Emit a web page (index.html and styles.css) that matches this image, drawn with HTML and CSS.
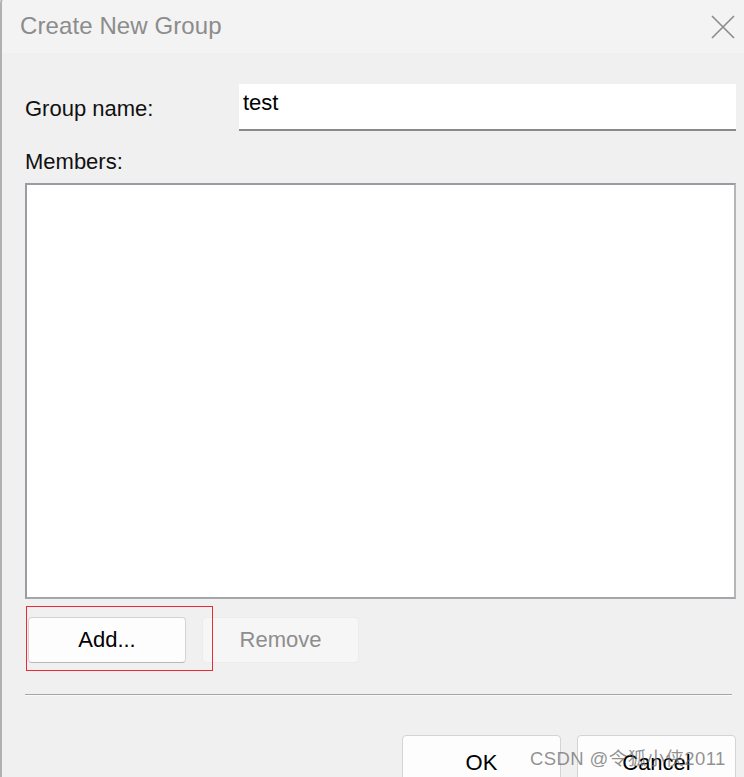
FILE: index.html
```html
<!DOCTYPE html>
<html>
<head>
<meta charset="utf-8">
<link rel="stylesheet" href="styles.css">
</head>
<body>
<div class="dialog">
  <div class="titlebar">
    <span class="title">Create New Group</span>
    <svg class="close" width="24" height="24" viewBox="0 0 24 24"><path d="M1 1 L23 23 M23 1 L1 23" stroke="#8a8a8a" stroke-width="1.6" fill="none"/></svg>
  </div>
  <div class="content">
    <div class="name-row">
      <span class="label name-label">Group name:</span>
      <div class="input">test</div>
    </div>
    <div class="label members-label">Members:</div>
    <div class="list"></div>
    <div class="list-buttons">
      <button class="btn add">Add...</button>
      <button class="btn remove">Remove</button>
      <div class="highlight"></div>
    </div>
    <div class="sep"></div>
    <div class="footer">
      <button class="btn ok">OK</button>
      <button class="btn cancel">Cancel</button>
    </div>
  </div>
  <div class="watermark">CSDN @令狐小侠2011</div>
</div>
</body>
</html>
```
FILE: styles.css
```css
html, body {
  margin: 0;
  padding: 0;
  background: #f0f0f0;
  overflow: hidden;
  font-family: "Liberation Sans", Arial, sans-serif;
}
.dialog {
  position: relative;
  width: 760px;
  height: 800px;
  margin-top: -8px;
  border-top: 1px solid #b0b0b0;
  border-left: 2px solid #b0b0b0;
  border-top-left-radius: 12px;
  background: #f0f0f0;
}
.titlebar {
  height: 60px;
  background: #f3f3f3;
  display: flex;
  align-items: center;
  padding-left: 18px;
  padding-top: 5px;
  box-sizing: border-box;
  border-top-left-radius: 12px;
}
.title {
  font-size: 24px;
  color: #8c8c8c;
  flex: 1;
  letter-spacing: 0.1px;
}
.close {
  margin-right: 27px;
  margin-top: 2px;
}
.content {
  padding: 30px 0 0 23px;
  width: 711px;
}
.label {
  font-size: 22px;
  color: #111;
}
.name-row {
  display: flex;
  align-items: center;
  height: 48px;
}
.name-label {
  width: 214px;
  margin-top: 4px;
}
.input {
  flex: 1;
  height: 47px;
  box-sizing: border-box;
  background: #fff;
  border-bottom: 2px solid #8a8a8a;
  font-size: 22px;
  color: #000;
  padding: 6px 0 0 4px;
}
.members-label {
  margin-top: 18px;
  height: 34px;
  line-height: 26px;
}
.list {
  height: 416px;
  box-sizing: border-box;
  background: #fff;
  border: 2px solid #9a9ca2;
  border-right-color: #b4b6ba;
  border-bottom-color: #a4a6aa;
}
.list-buttons {
  position: relative;
  display: flex;
  align-items: flex-start;
  padding: 18px 0 0 3px;
}
.highlight {
  position: absolute;
  left: 0;
  top: 6px;
  width: 189px;
  height: 67px;
  box-sizing: border-box;
  border: 1px solid transparent;
  box-shadow: inset 0 0 0 1px #ea2a35;
  background: transparent;
}
.btn {
  font-family: inherit;
  font-size: 22px;
  box-sizing: border-box;
  height: 46px;
  border-radius: 4px;
  padding: 0;
  margin: 0;
}
.add {
  width: 158px;
  background: #fdfdfd;
  border: 1px solid #d4d4d4;
  border-bottom-color: #b8b8b8;
  color: #000;
}
.remove {
  margin-left: 16px;
  width: 157px;
  height: 46px;
  background: #f6f6f6;
  border: 1px solid #ececec;
  color: #8e8e8e;
}
.sep {
  margin-top: 31px;
  width: 707px;
  height: 1px;
  background: #a5a5a5;
  border-bottom: 1px solid #fafafa;
}
.footer {
  display: flex;
  justify-content: flex-end;
  gap: 16px;
  margin-top: 39px;
}
.ok, .cancel {
  width: 159px;
  height: 50px;
  background: #fdfdfd;
  border: 1px solid #d4d4d4;
  color: #000;
  padding-top: 6px;
}
.watermark {
  position: absolute;
  left: 528px;
  top: 751px;
  font-size: 18.5px;
  color: rgba(110, 110, 110, 0.75);
  font-family: "Liberation Sans", "Noto Sans CJK SC", sans-serif;
  letter-spacing: 0.4px;
}
```
